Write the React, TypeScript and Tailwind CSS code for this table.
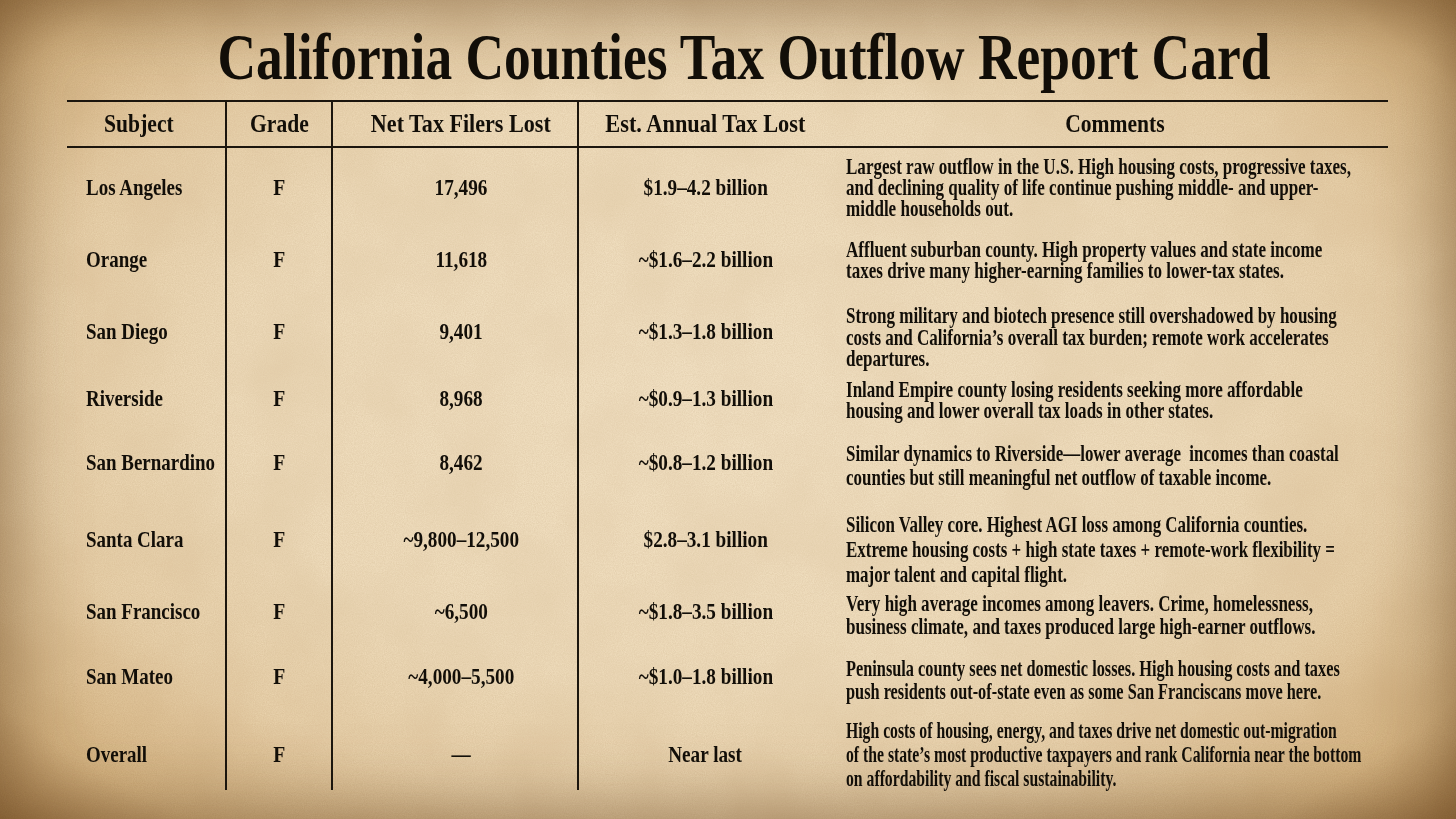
import React from "react";

type Row = {
  name: string;
  filers: string;
  tax: string;
  lines: string[];
  h: string;
  pt: string;
  lead: string;
  sx: string;
};

const rows: Row[] = [
  {
    name: "Los Angeles",
    filers: "17,496",
    tax: "$1.9–4.2 billion",
    lines: [
      "Largest raw outflow in the U.S. High housing costs, progressive taxes,",
      "and declining quality of life continue pushing middle- and upper-",
      "middle households out.",
    ],
    h: "h-[78px]",
    pt: "pt-[8px]",
    lead: "leading-[21px]",
    sx: "scale-x-[0.71]",
  },
  {
    name: "Orange",
    filers: "11,618",
    tax: "~$1.6–2.2 billion",
    lines: [
      "Affluent suburban county. High property values and state income",
      "taxes drive many higher-earning families to lower-tax states.",
    ],
    h: "h-[66px]",
    pt: "pt-[13px]",
    lead: "leading-[21px]",
    sx: "scale-x-[0.71]",
  },
  {
    name: "San Diego",
    filers: "9,401",
    tax: "~$1.3–1.8 billion",
    lines: [
      "Strong military and biotech presence still overshadowed by housing",
      "costs and California’s overall tax burden; remote work accelerates",
      "departures.",
    ],
    h: "h-[70px]",
    pt: "pt-[13px]",
    lead: "leading-[21.5px]",
    sx: "scale-x-[0.71]",
  },
  {
    name: "Riverside",
    filers: "8,968",
    tax: "~$0.9–1.3 billion",
    lines: [
      "Inland Empire county losing residents seeking more affordable",
      "housing and lower overall tax loads in other states.",
    ],
    h: "h-[72px]",
    pt: "pt-[17px]",
    lead: "leading-[21px]",
    sx: "scale-x-[0.71]",
  },
  {
    name: "San Bernardino",
    filers: "8,462",
    tax: "~$0.8–1.2 billion",
    lines: [
      "Similar dynamics to Riverside—lower average\u00a0 incomes than coastal",
      "counties but still meaningful net outflow of taxable income.",
    ],
    h: "h-[56px]",
    pt: "pt-[7px]",
    lead: "leading-[24px]",
    sx: "scale-x-[0.705]",
  },
  {
    name: "Santa Clara",
    filers: "~9,800–12,500",
    tax: "$2.8–3.1 billion",
    lines: [
      "Silicon Valley core. Highest AGI loss among California counties.",
      "Extreme housing costs + high state taxes + remote-work flexibility =",
      "major talent and capital flight.",
    ],
    h: "h-[94px]",
    pt: "pt-[22px]",
    lead: "leading-[25px]",
    sx: "scale-x-[0.705]",
  },
  {
    name: "San Francisco",
    filers: "~6,500",
    tax: "~$1.8–3.5 billion",
    lines: [
      "Very high average incomes among leavers. Crime, homelessness,",
      "business climate, and taxes produced large high-earner outflows.",
    ],
    h: "h-[50px]",
    pt: "pt-[8px]",
    lead: "leading-[23px]",
    sx: "scale-x-[0.71]",
  },
  {
    name: "San Mateo",
    filers: "~4,000–5,500",
    tax: "~$1.0–1.8 billion",
    lines: [
      "Peninsula county sees net domestic losses. High housing costs and taxes",
      "push residents out-of-state even as some San Franciscans move here.",
    ],
    h: "h-[84px]",
    pt: "pt-[23px]",
    lead: "leading-[23px]",
    sx: "scale-x-[0.68]",
  },
  {
    name: "Overall",
    filers: "—",
    tax: "Near last",
    lines: [
      "High costs of housing, energy, and taxes drive net domestic out-migration",
      "of the state’s most productive taxpayers and rank California near the bottom",
      "on affordability and fiscal sustainability.",
    ],
    h: "h-[52px]",
    pt: "pt-[0px]",
    lead: "leading-[24px]",
    sx: "scale-x-[0.655]",
  },
];

const cols = "grid grid-cols-[160px_106px_246px_253px_556px]";
const vline = "border-r-2 border-[#1b150d]";

function Squeeze({
  children,
  className,
}: {
  children: React.ReactNode;
  className?: string;
}) {
  return (
    <span
      className={
        "inline-block whitespace-nowrap " + (className ?? "scale-x-[0.79]")
      }
    >
      {children}
    </span>
  );
}

export default function App() {
  return (
    <div
      className="relative w-[1456px] h-[819px] overflow-hidden text-[#120e08] bg-[radial-gradient(ellipse_74%_80%_at_50%_48%,#f5e5c8_0%,#f2e0c0_45%,#ebd4ae_65%,#d9b988_82%,#a57d4b_95%,#6e4c28_100%)] shadow-[inset_0_0_80px_rgba(95,62,25,0.6)]"
      style={{ fontFamily: '"Liberation Serif", "Times New Roman", serif' }}
    >
      {/* paper grain */}
      <svg
        className="pointer-events-none absolute inset-0 h-full w-full opacity-[0.25] mix-blend-multiply"
        xmlns="http://www.w3.org/2000/svg"
      >
        <filter id="grain">
          <feTurbulence
            type="fractalNoise"
            baseFrequency="0.9"
            numOctaves="3"
            seed="4"
          />
          <feColorMatrix
            type="matrix"
            values="0 0 0 0 0.45  0 0 0 0 0.32  0 0 0 0 0.18  0 0 0 0.9 0"
          />
        </filter>
        <filter id="blotch">
          <feTurbulence
            type="fractalNoise"
            baseFrequency="0.012"
            numOctaves="4"
            seed="9"
          />
          <feColorMatrix
            type="matrix"
            values="0 0 0 0 0.5  0 0 0 0 0.35  0 0 0 0 0.2  0 0 0 1.2 -0.45"
          />
        </filter>
        <rect width="100%" height="100%" filter="url(#grain)" />
        <rect width="100%" height="100%" filter="url(#blotch)" />
      </svg>

      <div className="relative">
        {/* Title */}
        <div className="mt-[24px] h-[66px] pl-[31px] flex justify-center">
          <h1 className="text-[66px] leading-[66px] font-bold">
            <Squeeze className="scale-x-[0.81]">
              California Counties Tax Outflow Report Card
            </Squeeze>
          </h1>
        </div>

        {/* Table */}
        <div className="ml-[67px] mt-[10px] w-[1321px] border-t-2 border-[#1b150d]">
          {/* header */}
          <div
            className={
              cols +
              " h-[46px] border-b-2 border-[#1b150d] text-[26px] leading-[44px] font-bold"
            }
          >
            <div className={vline + " flex justify-center pr-[15px]"}>
              <Squeeze className="scale-x-[0.83]">Subject</Squeeze>
            </div>
            <div className={vline + " flex justify-center"}>
              <Squeeze className="scale-x-[0.83]">Grade</Squeeze>
            </div>
            <div className={vline + " flex justify-center pl-[12px]"}>
              <Squeeze className="scale-x-[0.85]">Net Tax Filers Lost</Squeeze>
            </div>
            <div className="flex justify-center">
              <Squeeze className="scale-x-[0.86]">Est. Annual Tax Lost</Squeeze>
            </div>
            <div className="flex justify-center pl-[10px]">
              <Squeeze className="scale-x-[0.83]">Comments</Squeeze>
            </div>
          </div>

          {/* body */}
          {rows.map((r) => (
            <div
              key={r.name}
              className={cols + " " + r.h + " text-[24px] font-bold"}
            >
              <div className={vline + " flex items-center pl-[19px]"}>
                <span className="inline-block whitespace-nowrap origin-left scale-x-[0.79] leading-[24px]">
                  {r.name}
                </span>
              </div>
              <div className={vline + " flex items-center justify-center"}>
                <span className="inline-block scale-x-[0.82] leading-[24px]">
                  F
                </span>
              </div>
              <div
                className={
                  vline + " flex items-center justify-center pl-[12px]"
                }
              >
                <Squeeze className="scale-x-[0.8] leading-[24px]">
                  {r.filers}
                </Squeeze>
              </div>
              <div className="flex items-center justify-center">
                <Squeeze className="scale-x-[0.8] leading-[24px]">
                  {r.tax}
                </Squeeze>
              </div>
              <div className={"pl-[14px] " + r.pt}>
                <div
                  className={
                    "origin-top-left whitespace-nowrap " + r.sx + " " + r.lead
                  }
                >
                  {r.lines.map((l, i) => (
                    <div key={i}>{l}</div>
                  ))}
                </div>
              </div>
            </div>
          ))}

          {/* tail of the vertical rules */}
          <div className={cols + " h-[19px]"}>
            <div className={vline} />
            <div className={vline} />
            <div className={vline} />
            <div />
            <div />
          </div>
        </div>
      </div>
    </div>
  );
}
